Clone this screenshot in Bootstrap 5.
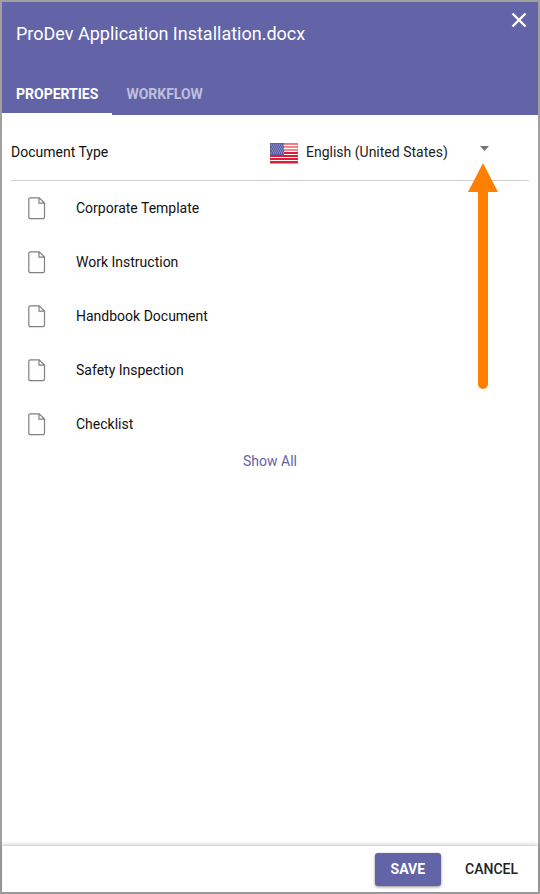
<!DOCTYPE html>
<html lang="en">
<head>
<meta charset="utf-8">
<meta name="viewport" content="width=device-width, initial-scale=1">
<title>ProDev Application Installation.docx</title>
<link rel="stylesheet" href="https://cdn.jsdelivr.net/npm/bootstrap@5.3.0/dist/css/bootstrap.min.css">
<style>
  :root { --brand: #6264a7; }
  body { font-family: Roboto, sans-serif; font-size: 14px; line-height: 20px; color: #111; }
  .dialog-frame { border: 2px solid #a0a0a0; }
  .dialog-head { background: var(--brand); }
  .dialog-title { font-size: 18px; line-height: 24px; padding: 20px 48px 0 14px; margin-bottom: 29px; font-weight: 400; }
  .close-btn { padding: 8px; top: 2px; right: 3px; line-height: 0; }
  .tab-btn { background: none; border: 0; border-bottom: 2px solid transparent; border-radius: 0; color: #bebfdc; font-size: 14px; font-weight: 700; line-height: 20px; padding: 9px 14px; }
  .tab-btn.active { color: #fff; border-bottom-color: #fff; }
  .dialog-main { padding: 0 9px; }
  .type-row { padding: 25px 0 16px; border-bottom: 1px solid #d0d0d0; }
  .lang-box { line-height: 24px; }
  .lang-select { appearance: none; background: none; border: 0; padding: 0; color: #222; line-height: 24px; height: 24px; }
  .caret-icon { margin: 6px 40px 0 0; pointer-events: none; }
  .doc-item { height: 54px; padding: 0 17px; gap: 30px; border: 0; background: none; color: #111; line-height: 20px; }
  .show-all { color: var(--brand); text-decoration: none; }
  .pointer-arrow { top: 48px; right: 36px; pointer-events: none; }
  .dialog-foot { box-shadow: 0 -1px 4px rgba(0,0,0,.25); padding: 7px 4px 6px; gap: 8px; }
  .foot-btn { font-size: 14px; line-height: 21px; padding: 6px 16px; border: 0; border-radius: 3px; font-weight: 500; color: #222; }
  .foot-save { background: var(--brand); color: #fff; font-weight: 700; box-shadow: 0 1px 3px rgba(0,0,0,.45); }
</style>
</head>
<body>
<div class="dialog-frame min-vh-100 d-flex flex-column bg-white">
  <header class="dialog-head text-white position-relative">
    <h1 class="dialog-title">ProDev Application Installation.docx</h1>
    <button type="button" class="close-btn btn text-white border-0 position-absolute" aria-label="Close">
      <svg width="16" height="16" viewBox="0 0 16 16" stroke="#fff" stroke-width="2.4" aria-hidden="true"><path d="M1.500 1.500l13 13M14.500 1.500l-13 13"/></svg>
    </button>
    <div class="d-flex" role="tablist">
      <button type="button" class="tab-btn active" role="tab" aria-selected="true">PROPERTIES</button>
      <button type="button" class="tab-btn" role="tab" aria-selected="false">WORKFLOW</button>
    </div>
  </header>

  <main class="dialog-main flex-grow-1 position-relative">
    <div class="type-row row g-0 align-items-center">
      <label class="col-6" for="language">Document Type</label>
      <div class="lang-box col-6 d-flex">
        <svg class="flex-shrink-0 me-2" width="28" height="24" viewBox="0 0 28 24" aria-hidden="true">
          <rect x="0" y="4" width="28" height="20" fill="#bbb"/>
          <rect x="0" y="3" width="28" height="20" fill="#fff"/>
          <path d="M0 4h28M0 7h28M0 10h28" stroke="#f4858c" stroke-width="1.8"/>
          <path d="M0 13h28M0 16h28M0 19h28M0 22h28" stroke="#e01b36" stroke-width="1.8"/>
          <rect x="0" y="3" width="14" height="12" fill="#5a5fa6"/>
          <path d="M1 5h13M2 7h12M1 9h13M2 11h12M1 13h13" stroke="#a9aed6" stroke-width="1" stroke-dasharray="1 1"/>
          <rect x=".5" y="3.5" width="27" height="20" fill="none" stroke="#773" stroke-opacity=".2"/>
        </svg>
        <select id="language" class="lang-select flex-grow-1">
          <option>English (United States)</option>
        </select>
        <svg class="caret-icon flex-shrink-0" width="9" height="5" viewBox="0 0 9 5" aria-hidden="true"><path d="M0 0h9L4.500 5z" fill="#757575"/></svg>
      </div>
    </div>

    <svg class="d-none" aria-hidden="true">
      <symbol id="page" viewBox="0 0 18 23"><path d="M2.500 .8h8.700l5.300 5.300v13.900a1.700 1.700 0 0 1-1.700 1.700H2.500A1.700 1.700 0 0 1 .8 20V2.500A1.700 1.700 0 0 1 2.500 .8zM11 .8v5.400h5.500" fill="none" stroke="#857f7d" stroke-width="1.200"/></symbol>
    </svg>
    <div class="d-flex flex-column">
      <button type="button" class="doc-item d-flex align-items-center text-start"><svg width="18" height="23" aria-hidden="true"><use href="#page"/></svg>Corporate Template</button>
      <button type="button" class="doc-item d-flex align-items-center text-start"><svg width="18" height="23" aria-hidden="true"><use href="#page"/></svg>Work Instruction</button>
      <button type="button" class="doc-item d-flex align-items-center text-start"><svg width="18" height="23" aria-hidden="true"><use href="#page"/></svg>Handbook Document</button>
      <button type="button" class="doc-item d-flex align-items-center text-start"><svg width="18" height="23" aria-hidden="true"><use href="#page"/></svg>Safety Inspection</button>
      <button type="button" class="doc-item d-flex align-items-center text-start"><svg width="18" height="23" aria-hidden="true"><use href="#page"/></svg>Checklist</button>
    </div>
    <div class="text-center"><a class="show-all" href="#">Show All</a></div>

    <svg class="pointer-arrow position-absolute" width="38" height="228" viewBox="0 0 38 228" aria-hidden="true">
      <path d="M19 0l15 29H4z" fill="#ff8000"/>
      <path d="M19 25v196" stroke="#ff8000" stroke-width="10" stroke-linecap="round"/>
    </svg>
  </main>

  <footer class="dialog-foot d-flex justify-content-end">
    <button type="button" class="foot-btn foot-save btn">SAVE</button>
    <button type="button" class="foot-btn btn">CANCEL</button>
  </footer>
</div>
<script src="https://cdn.jsdelivr.net/npm/bootstrap@5.3.0/dist/js/bootstrap.bundle.min.js"></script>
</body>
</html>
